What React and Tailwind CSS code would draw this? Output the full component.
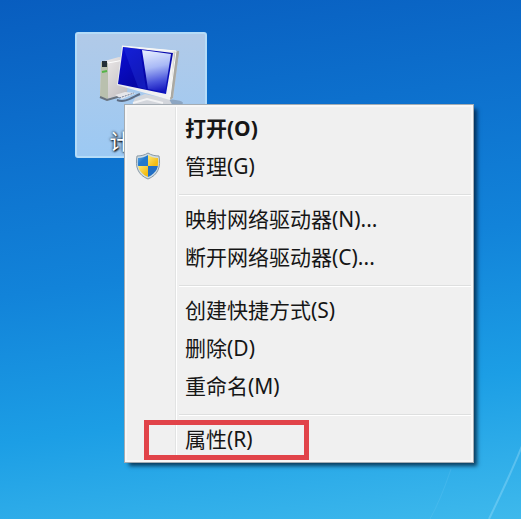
const groups = [
  [
    { label: '打开(O)', primary: true },
    { label: '管理(G)', shield: true },
  ],
  [{ label: '映射网络驱动器(N)...' }, { label: '断开网络驱动器(C)...' }],
  [{ label: '创建快捷方式(S)' }, { label: '删除(D)' }, { label: '重命名(M)' }],
  [{ label: '属性(R)', highlighted: true }],
];

function ComputerIcon() {
  return (
    <svg viewBox="0 0 88 64" className="h-16 w-[88px]" aria-hidden="true">
      <defs>
        <linearGradient id="tower" x1="0" y1="0" x2="1" y2="1">
          <stop offset="0" stopColor="#f1eeee" />
          <stop offset="1" stopColor="#bdb9bb" />
        </linearGradient>
        <linearGradient id="frame" x1="0" y1="0" x2="1" y2="0">
          <stop offset="0" stopColor="#e9eaf0" />
          <stop offset="0.88" stopColor="#f3f3f2" />
          <stop offset="1" stopColor="#a6a8a4" />
        </linearGradient>
        <linearGradient id="screen" x1="0" y1="0" x2="1" y2="1">
          <stop offset="0" stopColor="#0a10d6" />
          <stop offset="0.55" stopColor="#0606a6" />
          <stop offset="1" stopColor="#0c16c4" />
        </linearGradient>
        <linearGradient id="glare" x1="0.4" y1="0" x2="0.55" y2="1">
          <stop offset="0" stopColor="#e2ebff" />
          <stop offset="0.4" stopColor="#a9b9f6" />
          <stop offset="0.75" stopColor="#4a55dc" />
          <stop offset="1" stopColor="#1416bd" />
        </linearGradient>
      </defs>
      <ellipse cx="66" cy="59" rx="20" ry="4" fill="#7c8ea5" opacity="0.6" />
      <path d="M20 56 C28 59 34 54 43 50" stroke="#5d6c83" strokeWidth="2" fill="none" />
      <path d="M4 18 L22 13 L32 15 L30 50 L10 55 L3 53 Z" fill="url(#tower)" />
      <path d="M4 18 L11 19 L11 55 L3 53 Z" fill="#b9c0ae" />
      <path d="M11 19 L32 15" stroke="#fff" strokeWidth="1" />
      <rect x="5" y="17" width="5" height="6" fill="#232f36" />
      <path d="M5 28 L10 27" stroke="#55b447" strokeWidth="2" />
      <path d="M3 53 L10 56 L24 52" stroke="#68727e" strokeWidth="2" fill="none" />
      <path d="M18 51 L28 48 L39 49 L25 55 Z" fill="#e6e6ea" />
      <path d="M22 54 L37 49" stroke="#75819a" strokeWidth="1" strokeDasharray="2 1" />
      <path d="M38 54 L48 50 L72 55 L77 64 L34 64 Z" fill="#d3d6dc" />
      <path d="M36 59 L50 55 L66 59" stroke="#f1f2f4" strokeWidth="2" fill="none" />
      <path d="M25 2 L82 7 L76 54 L73 56 L20 41 Z" fill="url(#frame)" />
      <path d="M78 8 L82 7 L76 54 L73 56 Z" fill="#aaa9a3" />
      <path d="M26 3 L76 9 L69 50 L21 40 Z" fill="url(#screen)" />
      <path d="M45 6 L74 10 L68 48 L51 45 Z" fill="url(#glare)" />
      <path d="M26 3 L43 5 L49 45 L41 43 Z" fill="#2d46e8" opacity="0.3" />
      <path d="M25 2 L79 7 L73 53" stroke="#fafaf8" strokeWidth="1" fill="none" />
    </svg>
  );
}

function ShieldIcon() {
  return (
    <svg viewBox="0 0 26 28" className="h-7 w-[26px]" aria-hidden="true">
      <defs>
        <clipPath id="shield-face">
          <path d="M13 3 C16 5 19 6 23 6 C24 15 22 21 13 25 C4 21 2 15 3 6 C7 6 10 5 13 3 Z" />
        </clipPath>
        <linearGradient id="shield-blue" x1="0" y1="0" x2="1" y2="1">
          <stop offset="0" stopColor="#8bc7ef" />
          <stop offset="0.6" stopColor="#2379cd" />
        </linearGradient>
        <linearGradient id="shield-gold" x1="0" y1="0" x2="1" y2="1">
          <stop offset="0" stopColor="#fff08b" />
          <stop offset="0.7" stopColor="#f3bd16" />
        </linearGradient>
      </defs>
      <path
        d="M13 1 C16 3 20 4 24 4 C26 15 23 23 13 27 C3 23 0 15 2 4 C6 4 10 3 13 1 Z"
        fill="#cfdde6"
        stroke="#8998a3"
        strokeWidth="1"
      />
      <g clipPath="url(#shield-face)">
        <rect width="13" height="14" fill="url(#shield-blue)" />
        <rect x="13" width="13" height="14" fill="url(#shield-gold)" />
        <rect y="14" width="13" height="14" fill="url(#shield-gold)" />
        <rect x="13" y="14" width="13" height="14" fill="#226fc4" />
      </g>
    </svg>
  );
}

function DesktopShortcut() {
  return (
    <button
      type="button"
      className="absolute top-8 left-[75px] flex h-[126px] w-[132px] flex-col items-center justify-between rounded-[3px] border-2 border-[#b5dcf8] bg-linear-to-b from-[#b1cae8] to-[#9cc9f3] pt-2.5 pb-px"
    >
      <ComputerIcon />
      <span className="text-[21px] leading-7 text-white [text-shadow:1px_1px_2px_#000,0_0_3px_#000]">
        计算机
      </span>
    </button>
  );
}

function MenuItem({ label, primary, shield, highlighted }) {
  return (
    <button
      type="button"
      role="menuitem"
      className="relative flex h-[38px] w-full items-center text-left"
    >
      <span className="flex w-[58px] shrink-0 pl-2">{shield && <ShieldIcon />}</span>
      <span className={primary ? 'font-bold' : ''}>{label}</span>
      {highlighted && (
        <span className="absolute top-0 left-[17px] h-10 w-[165px] border-5 border-[#e14349]" />
      )}
    </button>
  );
}

function ContextMenu() {
  return (
    <div
      role="menu"
      className="absolute top-[104px] left-[124px] w-[350px] border border-[#a4acb3] bg-[#f0f0f0] text-[21px] leading-7 text-[#161616] shadow-[4px_4px_4px_-1px_rgba(0,25,50,0.75)]"
    >
      <div className="border-2 border-[#f7f7f7] bg-[linear-gradient(to_right,transparent_48px,#e2e3e3_48px,#e2e3e3_49px,#fff_49px,#fff_50px,transparent_50px)] py-0.5">
        {groups.map((items, index) => (
          <div key={items[0].label}>
            {index > 0 && (
              <div role="separator" className="flex h-[15px] items-end pb-1 pl-[52px]">
                <div className="h-0.5 w-full border-t border-b border-t-[#dedfdf] border-b-white" />
              </div>
            )}
            {items.map((item) => (
              <MenuItem key={item.label} {...item} />
            ))}
          </div>
        ))}
      </div>
    </div>
  );
}

export default function App() {
  return (
    <main className="relative min-h-screen overflow-hidden bg-[linear-gradient(172deg,#085dbf_0%,#0d70cd_25%,#1283d9_50%,#1c9ee5_75%,#3eb9ec_100%)] font-['Noto_Sans','Noto_Sans_CJK_SC',sans-serif]">
      <svg
        viewBox="0 0 160 180"
        className="pointer-events-none absolute right-0 bottom-0 h-[180px] w-40"
        aria-hidden="true"
      >
        <path d="M161 107 C151 132 141 153 128 180" stroke="#a6e2fb" strokeWidth="2" opacity="0.35" fill="none" />
        <path d="M90 130 Q80 160 69 180" stroke="#93dafa" strokeWidth="1" opacity="0.15" fill="none" />
      </svg>
      <DesktopShortcut />
      <ContextMenu />
    </main>
  );
}
